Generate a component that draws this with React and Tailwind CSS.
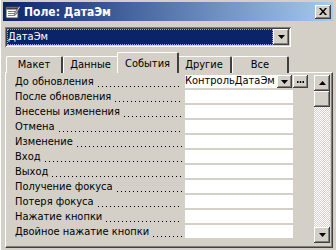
import React from "react";

const rows = [
  "До обновления",
  "После обновления",
  "Внесены изменения",
  "Отмена",
  "Изменение",
  "Вход",
  "Выход",
  "Получение фокуса",
  "Потеря фокуса",
  "Нажатие кнопки",
  "Двойное нажатие кнопки",
];

const raised =
  "bg-[#d4d0c8] shadow-[inset_-1px_-1px_#404040,inset_1px_1px_#ffffff,inset_-2px_-2px_#808080,inset_2px_2px_#d4d0c8]";

function DownArrow() {
  return (
    <svg width="7" height="4" viewBox="0 0 7 4">
      <path d="M0 0h7L3.5 4z" fill="#000" />
    </svg>
  );
}
function UpArrow() {
  return (
    <svg width="7" height="4" viewBox="0 0 7 4">
      <path d="M0 4h7L3.5 0z" fill="#000" />
    </svg>
  );
}

function TitleIcon() {
  return (
    <svg width="16" height="16" viewBox="0 0 16 16">
      <rect x="1" y="3" width="12" height="11" fill="#ffffff" stroke="#404040" />
      <rect x="1.5" y="3.5" width="11" height="2" fill="#404040" />
      <rect x="3" y="7" width="7" height="1" fill="#808080" />
      <rect x="3" y="9" width="6" height="1" fill="#808080" />
      <rect x="3" y="11" width="7" height="1" fill="#808080" />
      <path d="M9 10 L14 2 L15.5 3 L10.5 11 Z" fill="#c0c0c0" stroke="#202020" strokeWidth="0.6" />
    </svg>
  );
}

function Tab({ label, w, selected }) {
  if (selected) {
    return (
      <div
        className={`relative z-10 -mx-[2px] h-[21px] ${w} flex items-start justify-center pt-[3px] bg-[#d4d0c8] border-t border-l border-white border-r-2 border-r-[#404040] rounded-t-[2px]`}
      >
        {label}
      </div>
    );
  }
  return (
    <div
      className={`mt-[4px] h-[17px] ${w} flex items-center justify-center bg-[#d4d0c8] border-t border-l border-white border-r-2 border-r-[#404040] rounded-t-[2px]`}
    >
      {label}
    </div>
  );
}

export default function App() {
  return (
    <div className="w-[336px] h-[250px] bg-[#d4d0c8] overflow-hidden font-['DejaVu_Sans_Condensed','DejaVu_Sans',sans-serif] text-[11px] text-black flex flex-col border-l border-l-white pl-[2px] pr-[3px] pt-[2px]">
      {/* Title bar */}
      <div className="h-[19px] bg-[linear-gradient(to_right,#0a246a,#a6caf0)] flex items-center shrink-0">
        <div className="ml-[2px] mr-[3px] flex items-center">
          <TitleIcon />
        </div>
        <span className="text-white font-bold text-[12px]">Поле: ДатаЭм</span>
        <div className={`ml-auto mr-[2px] w-[16px] h-[14px] ${raised} flex items-center justify-center`}>
          <svg width="8" height="7" viewBox="0 0 8 7">
            <path d="M0 0h2l2 2.5L6 0h2L5 3.5 8 7H6L4 4.5 2 7H0l3-3.5z" fill="#000" />
          </svg>
        </div>
      </div>

      {/* Combo */}
      <div className="mt-[6px] ml-[2px] w-[286px] h-[20px] bg-white shadow-[inset_1px_1px_#808080,inset_-1px_-1px_#ffffff,inset_2px_2px_#404040,inset_-2px_-2px_#d4d0c8] p-[2px] flex shrink-0">
        <div className="flex-1 bg-[#0a246a] text-white flex items-center pl-[1px] outline outline-1 outline-dotted outline-[#a0a0ff] -outline-offset-1">
          ДатаЭм
        </div>
        <div className={`w-[16px] ${raised} flex items-center justify-center`}>
          <DownArrow />
        </div>
      </div>

      {/* Tabs */}
      <div className="mt-[5px] ml-[3px] flex items-start h-[21px] shrink-0 relative z-10">
        <Tab label="Макет" w="w-[57px]" />
        <Tab label="Данные" w="w-[56px]" />
        <Tab label="События" w="w-[62px]" selected />
        <Tab label="Другие" w="w-[55px]" />
        <Tab label="Все" w="w-[57px]" />
      </div>

      {/* Panel */}
      <div className="-mt-[1px] ml-[2px] h-[176px] w-[328px] border-t border-l border-white border-r border-b border-r-[#404040] border-b-[#404040] shadow-[inset_-1px_-1px_#808080] flex shrink-0">
        <div className="pl-[9px] pt-[2px] flex flex-col gap-[2px]">
          {rows.map((r, i) => (
            <div key={r} className="flex h-[13px]">
              <div className="w-[170px] flex items-center overflow-hidden pt-[1px]">
                <span className="whitespace-nowrap">{r}</span>
                <span className="ml-[3px] mr-[3px] flex-1 h-[13px] bg-[linear-gradient(to_right,#000_1px,transparent_1px)] bg-[length:4px_1px] bg-repeat-x bg-[position:1px_10px]" />
              </div>
              {i === 0 ? (
                <div className="flex">
                  <div className="w-[92px] bg-white flex items-center whitespace-nowrap overflow-hidden">
                    КонтрольДатаЭм
                  </div>
                  <div className={`w-[15px] h-[13px] ${raised} flex items-center justify-center`}>
                    <DownArrow />
                  </div>
                  <div className={`ml-[1px] w-[15px] h-[13px] ${raised} flex items-center justify-center`}>
                    <svg width="7" height="2" viewBox="0 0 7 2">
                      <rect x="0" y="0" width="1.5" height="2" fill="#000" />
                      <rect x="2.75" y="0" width="1.5" height="2" fill="#000" />
                      <rect x="5.5" y="0" width="1.5" height="2" fill="#000" />
                    </svg>
                  </div>
                </div>
              ) : (
                <div className="w-[108px] bg-white" />
              )}
            </div>
          ))}
        </div>
        {/* Scrollbar */}
        <div className="ml-auto mr-[2px] mt-[2px] w-[16px] h-[168px] flex flex-col bg-[repeating-conic-gradient(#ffffff_0%_25%,#d4d0c8_0%_50%)] bg-[length:2px_2px]">
          <div className={`h-[16px] ${raised} flex items-center justify-center`}>
            <UpArrow />
          </div>
          <div className={`h-[16px] ${raised}`} />
          <div className="flex-1" />
          <div className={`h-[16px] ${raised} flex items-center justify-center`}>
            <DownArrow />
          </div>
        </div>
      </div>
    </div>
  );
}
